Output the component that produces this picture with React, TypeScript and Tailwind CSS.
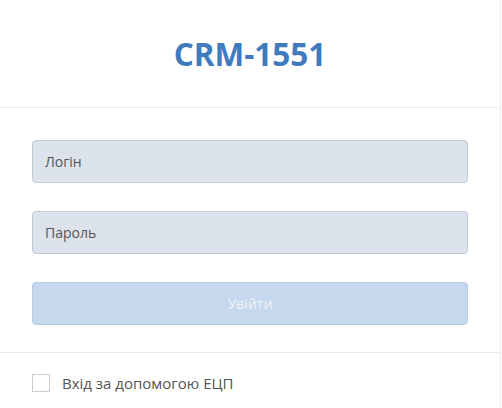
import React from "react";

const App: React.FC = () => {
	return (
		<div className="w-[502px] h-[408px] bg-white overflow-hidden" style={{ fontFamily: "'Open Sans', sans-serif" }}>
			<div className="w-[501px] h-full border-r border-[#ececec] flex flex-col">
				{/* Header */}
				<div className="h-[108px] flex items-center justify-center border-b border-[#ebebeb]">
					<h1 className="text-[31.5px] font-bold text-[#3f7bbd] mt-[1px]">CRM-1551</h1>
				</div>

				{/* Form */}
				<div className="px-[32px] pt-[32px] pb-[27px] flex flex-col gap-[28px] border-b border-[#ebebeb]">
					<input
						className="h-[43px] w-[436px] rounded-[4px] bg-[#dde3ed] border border-[#c3cad7] px-[12px] text-[14px] text-[#555] placeholder:text-[#555] outline-none"
						placeholder="Логін"
					/>
					<input
						type="password"
						className="h-[43px] w-[436px] rounded-[4px] bg-[#dde3ed] border border-[#c3cad7] px-[12px] text-[14px] text-[#555] placeholder:text-[#555] outline-none"
						placeholder="Пароль"
					/>
					<button className="h-[43px] w-[436px] rounded-[4px] bg-[#c5d8ed] border border-[#b6cce6] text-[14px] text-[#eef3f9]">
						Увійти
					</button>
				</div>

				{/* Footer */}
				<div className="flex items-center gap-[12px] px-[32px] pt-[19px]">
					<span className="w-[18px] h-[18px] border border-[#cccccc] bg-white"></span>
					<span className="text-[15px] text-[#555]">Вхід за допомогою ЕЦП</span>
				</div>
			</div>
		</div>
	);
};

export default App;
